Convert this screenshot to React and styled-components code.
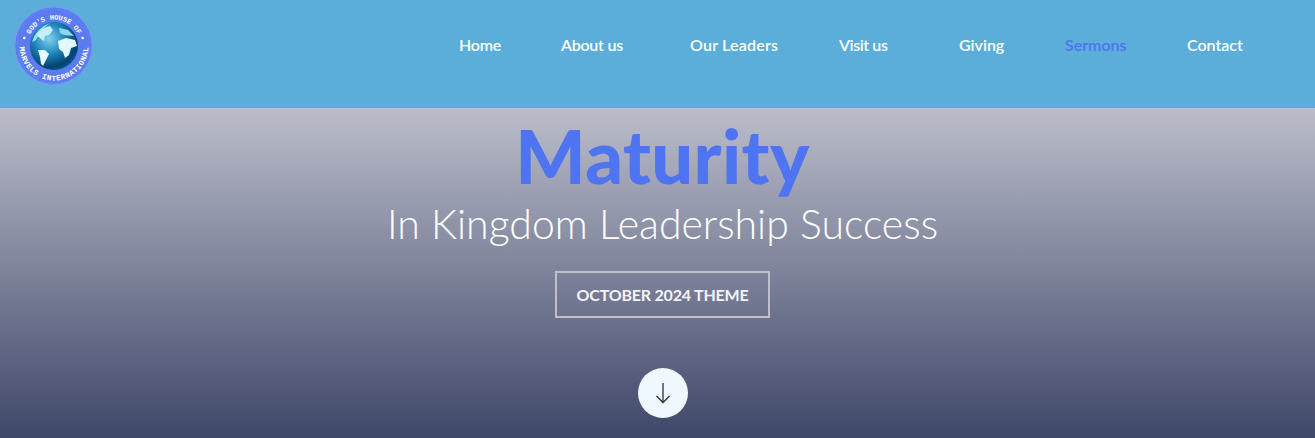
import React from 'react';
import styled, { createGlobalStyle } from 'styled-components';

const Global = createGlobalStyle`
    html, body { margin: 0; padding: 0; }
    body { font-family: "Lato", "Open Sans", sans-serif; overflow: hidden; }
`
const Page = styled.div`
    width: 1315px;
    height: 438px;
    display: flex;
    flex-direction: column;
    overflow: hidden;
`
const Header = styled.header`
    height: 108px;
    flex: none;
    display: flex;
    align-items: flex-start;
    justify-content: space-between;
    padding: 6px 71px 0 14px;
    box-sizing: border-box;
    background: #5aaed9;
`
const Nav = styled.nav`
    display: flex;
    padding-top: 29px;
`
const NavLink = styled.a`
    display: block;
    width: ${props => props.$slot}px;
    font-family: "Lato", sans-serif;
    font-weight: 600;
    font-size: 16px;
    line-height: 20px;
    letter-spacing: ${props => props.$track || 0}px;
    color: ${props => props.$active ? '#4f74f1' : '#ffffff'};
    white-space: nowrap;
`
const Hero = styled.section`
    flex: 1;
    display: flex;
    flex-direction: column;
    align-items: center;
    padding-left: 10px;
    background: linear-gradient(180deg, #bbbdca 0%, #3f4769 100%);
`
const Title = styled.h1`
    margin: 6px 0 0;
    font-family: "Lato", sans-serif;
    font-weight: 900;
    font-size: 74px;
    line-height: 84px;
    letter-spacing: 0.4px;
    color: #4f74f1;
`
const Subtitle = styled.h2`
    margin: 1px 0 0;
    font-family: "Lato", sans-serif;
    font-weight: 300;
    font-size: 41px;
    line-height: 50px;
    color: #ffffff;
`
const ThemeTag = styled.div`
    margin-top: 22px;
    width: 215px;
    height: 47px;
    box-sizing: border-box;
    border: 2px solid #bfc0cc;
    display: flex;
    align-items: center;
    justify-content: center;
    font-weight: 700;
    font-size: 16px;
    letter-spacing: -0.2px;
    color: #f4f4f8;
`
const ScrollButton = styled.button`
    margin-top: 50px;
    width: 50px;
    height: 50px;
    padding: 0;
    border: 0;
    border-radius: 50%;
    background: #f0f8ff;
    display: flex;
    align-items: center;
    justify-content: center;
`

const Logo = () => (
    <svg width="80" height="80" viewBox="0 0 80 80">
        <defs>
            <radialGradient id="sea" cx="0.4" cy="0.35" r="0.72">
                <stop offset="0" stopColor="#7fd3ee" />
                <stop offset="0.45" stopColor="#1f83bb" />
                <stop offset="0.82" stopColor="#05406f" />
                <stop offset="1" stopColor="#0d6a9c" />
            </radialGradient>
            <filter id="soft"><feGaussianBlur stdDeviation="0.45" /></filter>
            <path id="topArc" d="M13.5 40 A26.5 26.5 0 0 1 66.5 40" />
            <path id="bottomArc" d="M5.5 40 A34.5 34.5 0 0 0 74.5 40" />
        </defs>
        <circle cx="39.5" cy="39.7" r="38.7" fill="#5a7cf0" stroke="#7f96f5" strokeWidth="1" />
        <circle cx="39.5" cy="39.7" r="36.6" fill="none" stroke="#6d87f2" strokeWidth="0.5" />
        <circle cx="40" cy="40" r="24" fill="url(#sea)" />
        <g filter="url(#soft)">
            <path d="M22 29 Q27 22 36 20 L39 24 L35 29 L31 30 L30 35 L27 33 Z" fill="#c4eef6" />
            <path d="M24 44 L31 44 L35 48 L32 54 L29 60 L27 58 L26 51 Z" fill="#e2f8fa" />
            <path d="M44 35 L52 32 L61 34 L63 40 L57 42 L55 49 L51 52 L49 46 L45 43 Z" fill="#e2f8fa" />
            <path d="M45 22 L54 24 L60 30 L50 29 L46 27 Z" fill="#8fd6e8" />
            <path d="M18 36 Q22 22 36 17 Q26 24 22 34 Z" fill="#b5eefa" opacity="0.8" />
        </g>
        <circle cx="10.3" cy="32" r="1.3" fill="#fff" />
        <circle cx="68.7" cy="32" r="1.3" fill="#fff" />
        <text fill="#fff" fontFamily="Liberation Mono, monospace" fontSize="7" fontWeight="700">
            <textPath href="#topArc" startOffset="50%" textAnchor="middle">GOD'S HOUSE OF</textPath>
        </text>
        <text fill="#fff" fontFamily="Liberation Mono, monospace" fontSize="7.6" fontWeight="700" letterSpacing="0.5">
            <textPath href="#bottomArc" startOffset="50%" textAnchor="middle">MARVELS INTERNATIONAL</textPath>
        </text>
    </svg>
)

const ArrowDown = () => (
    <svg width="16" height="22" viewBox="0 0 16 22" fill="none" stroke="#2b2f3a" strokeWidth="1.3">
        <path d="M8 1 V20.5" />
        <path d="M1.5 14 L8 20.5 L14.5 14" />
    </svg>
)

const links = [
    { label: 'Home', slot: 102, track: -0.2 },
    { label: 'About us', slot: 129, track: -0.25 },
    { label: 'Our Leaders', slot: 149, track: 0.2 },
    { label: 'Visit us', slot: 120, track: -0.4 },
    { label: 'Giving', slot: 106 },
    { label: 'Sermons', slot: 122, active: true },
    { label: 'Contact', slot: 57 },
];

export default function App() {
    return (
        <Page>
            <Global />
            <Header>
                <Logo />
                <Nav>
                    {links.map(link => (
                        <NavLink key={link.label} $slot={link.slot} $track={link.track} $active={link.active}>{link.label}</NavLink>
                    ))}
                </Nav>
            </Header>
            <Hero>
                <Title>Maturity</Title>
                <Subtitle>In Kingdom Leadership Success</Subtitle>
                <ThemeTag>OCTOBER 2024 THEME</ThemeTag>
                <ScrollButton aria-label="Scroll down"><ArrowDown /></ScrollButton>
            </Hero>
        </Page>
    );
}
